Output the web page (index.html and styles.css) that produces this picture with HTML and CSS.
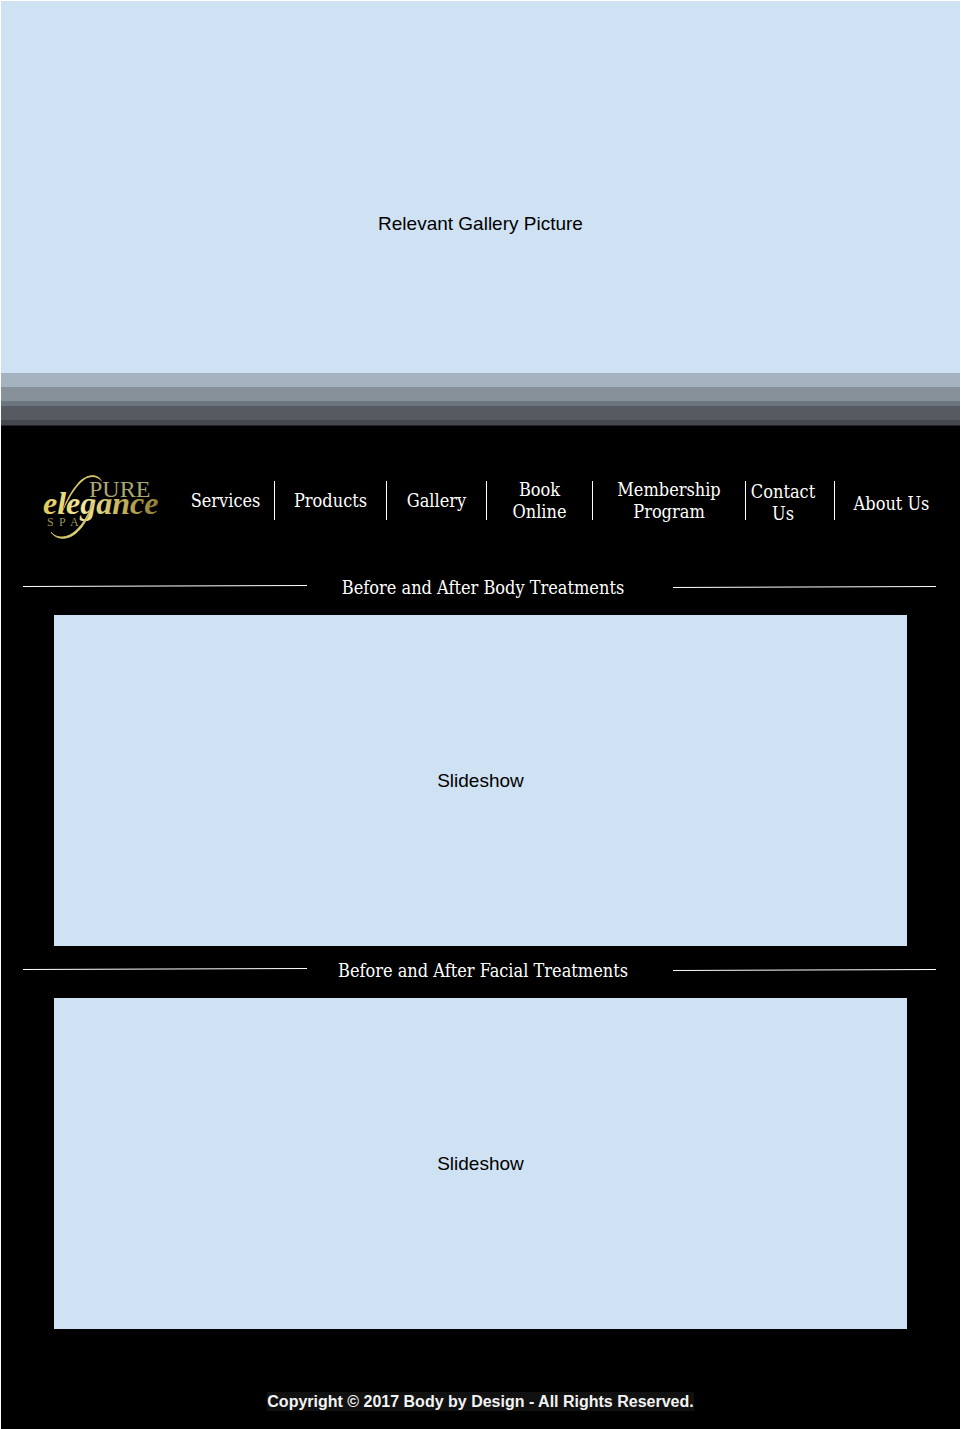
FILE: index.html
```html
<!DOCTYPE html>
<html lang="en">
<head>
<meta charset="utf-8">
<meta name="viewport" content="width=device-width, initial-scale=1">
<title>Pure Elegance Spa - Gallery</title>
<link rel="stylesheet" href="styles.css">
</head>
<body>
<div class="page">
  <header>
    <div class="hero">Relevant Gallery Picture</div>
    <div class="fade"></div>
    <div class="bar">
      <a class="logo" href="#" aria-label="Pure Elegance Spa">
        <svg viewBox="0 0 140 85" width="140" height="85">
          <defs>
            <linearGradient id="gold" x1="0" y1="0" x2="1" y2="0">
              <stop offset="0" stop-color="#e0c95c"/>
              <stop offset="0.35" stop-color="#f0e79b"/>
              <stop offset="0.65" stop-color="#c8b860"/>
              <stop offset="1" stop-color="#8f7c35"/>
            </linearGradient>
          </defs>
          <text class="logo-pure" x="59" y="32" fill="#aaa774">PURE</text>
          <text class="logo-name" x="13" y="49" fill="url(#gold)">elegance</text>
          <text class="logo-spa" y="61" fill="#98925c"><tspan x="17">S</tspan><tspan x="29">P</tspan><tspan x="40">A</tspan></text>
          <path d="M72 17C69 8 57 8 48 18C40 27 35 37 32 48C40 31 46 21 54 15C61 10 68 12 72 17Z" fill="#d9c768"/>
          <path d="M63 38C57 53 51 62 43 68C35 74 25 73 21 67C26 75 37 75 45 69C54 62 59 51 63 38Z" fill="#e3d88a" stroke="#c9bb62" stroke-width="1"/>
        </svg>
      </a>
      <nav class="menu" aria-label="Main">
        <a href="#">Services</a>
        <a href="#">Products</a>
        <a href="#">Gallery</a>
        <a href="#">Book<br>Online</a>
        <a href="#">Membership<br>Program</a>
        <a class="contact" href="#">Contact<br>Us</a>
        <a class="about" href="#">About Us</a>
      </nav>
    </div>
  </header>
  <main>
    <section>
      <div class="heading">
        <svg class="rule" viewBox="0 0 100 3" preserveAspectRatio="none"><path d="M0 1.5L100 0.5"/></svg>
        <h2>Before and After Body Treatments</h2>
        <svg class="rule" viewBox="0 0 100 3" preserveAspectRatio="none"><path d="M0 2.5L100 1.5"/></svg>
      </div>
      <div class="slideshow">Slideshow</div>
    </section>
    <section>
      <div class="heading">
        <svg class="rule" viewBox="0 0 100 3" preserveAspectRatio="none"><path d="M0 1.5L100 0.5"/></svg>
        <h2>Before and After Facial Treatments</h2>
        <svg class="rule" viewBox="0 0 100 3" preserveAspectRatio="none"><path d="M0 2.5L100 1.5"/></svg>
      </div>
      <div class="slideshow">Slideshow</div>
    </section>
  </main>
  <footer><small>Copyright © 2017 Body by Design - All Rights Reserved.</small></footer>
</div>
</body>
</html>
```
FILE: styles.css
```css
* { box-sizing: border-box; }
body {
  margin: 0;
  padding: 1px 1px 0;
  background: #fff;
  font-family: "Liberation Sans", Arial, sans-serif;
}
.page { background: #000; color: #fff; }
.hero, .slideshow {
  display: flex;
  align-items: center;
  justify-content: center;
  background: #cfe2f3;
  color: #000;
  font-size: 19px;
  line-height: 22px;
}
.hero { min-height: 372px; padding-top: 74px; }
.fade {
  height: 53px;
  background: linear-gradient(#a4b3bf 14px, #86919a 14px 28px, #6a757d 28px 33px, #565b62 33px 47px, #45484e 47px 52px, #222527 52px);
}
.bar {
  display: grid;
  grid-template-columns: 176fr 771fr;
  padding: 39px 12px 0 0;
}
.logo { padding-left: 29px; }
.logo svg { display: block; overflow: visible; }
.logo-pure { font: 24px "Liberation Serif", serif; }
.logo-name { font: italic bold 32px "Liberation Serif", serif; }
.logo-spa { font: 12px "Liberation Serif", serif; }
.menu {
  display: grid;
  grid-template-columns: 98fr 112fr 100fr 106fr 153fr 89fr 113fr;
  grid-template-rows: 39px;
  align-self: start;
  margin-top: 16px;
}
.menu a {
  display: flex;
  align-items: center;
  justify-content: center;
  height: 39px;
  border-right: 1px solid #fff;
  color: #fff;
  text-align: center;
  text-decoration: none;
  white-space: nowrap;
}
.menu a, .heading h2 {
  font-family: "DejaVu Serif Condensed", "DejaVu Serif", serif;
  font-stretch: condensed;
  font-size: 18px;
  font-weight: 400;
  line-height: 22px;
}
.menu .contact { padding: 4px 14px 0 0; }
.menu .about { border-right: 0; padding-top: 6px; }
.heading {
  display: grid;
  grid-template-columns: 284fr 365fr 263fr;
  padding: 0 24px 0 22px;
}
.heading h2 { margin: 0; text-align: center; white-space: nowrap; padding-right: 14px; }
.rule { width: 100%; height: 3px; margin-top: 8px; }
.rule path { stroke: #fff; stroke-width: 1px; vector-effect: non-scaling-stroke; }
main { display: grid; gap: 14px; padding-top: 27px; }
.slideshow { min-height: 331px; margin: 16px 53px 0; }
footer { padding: 62px 0 18px; text-align: center; line-height: 22px; }
footer small { padding: 1px 0; background: #111; color: #f3f3f3; font-size: 16px; font-weight: 700; }
```
